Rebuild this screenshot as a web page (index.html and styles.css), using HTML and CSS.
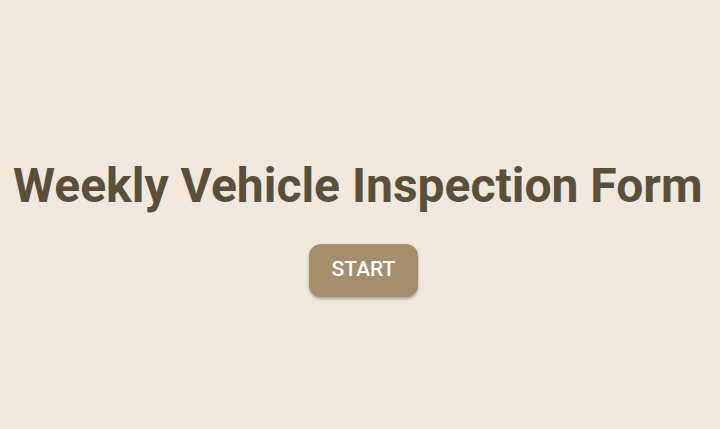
FILE: index.html
```html
<!DOCTYPE html>
<html lang="en">
<head>
    <meta charset="UTF-8">
    <meta name="viewport" content="width=device-width, initial-scale=1.0">
    <title>Weekly Vehicle Inspection Form</title>
    <link rel="stylesheet" href="styles.css">
</head>
<body>
    <main class="welcome">
        <h1 class="welcome-title">Weekly Vehicle Inspection Form</h1>
        <button type="button" class="start-button">START</button>
    </main>
</body>
</html>
```

FILE: styles.css
```css
body {
    margin: 0;
    background-color: #f0e8dd;
    color: #5b4f3b;
    font-family: Roboto, sans-serif;
}

.welcome {
    box-sizing: border-box;
    min-height: 100vh;
    padding: 24px 6px 0 13px;
    display: flex;
    flex-direction: column;
    align-items: center;
    justify-content: center;
    gap: 28px;
}

.welcome-title {
    margin: 0;
    width: 100%;
    font-size: 48px;
    font-weight: 700;
    line-height: 60px;
}

.start-button {
    padding: 13px 23px 15px;
    border: 0;
    border-radius: 12px;
    background-color: #a58e6b;
    color: #ffffff;
    font-family: inherit;
    font-size: 21px;
    font-weight: 500;
    line-height: 25px;
    box-shadow: 0 2px 3px rgba(0, 0, 0, 0.3);
    cursor: pointer;
}
```
